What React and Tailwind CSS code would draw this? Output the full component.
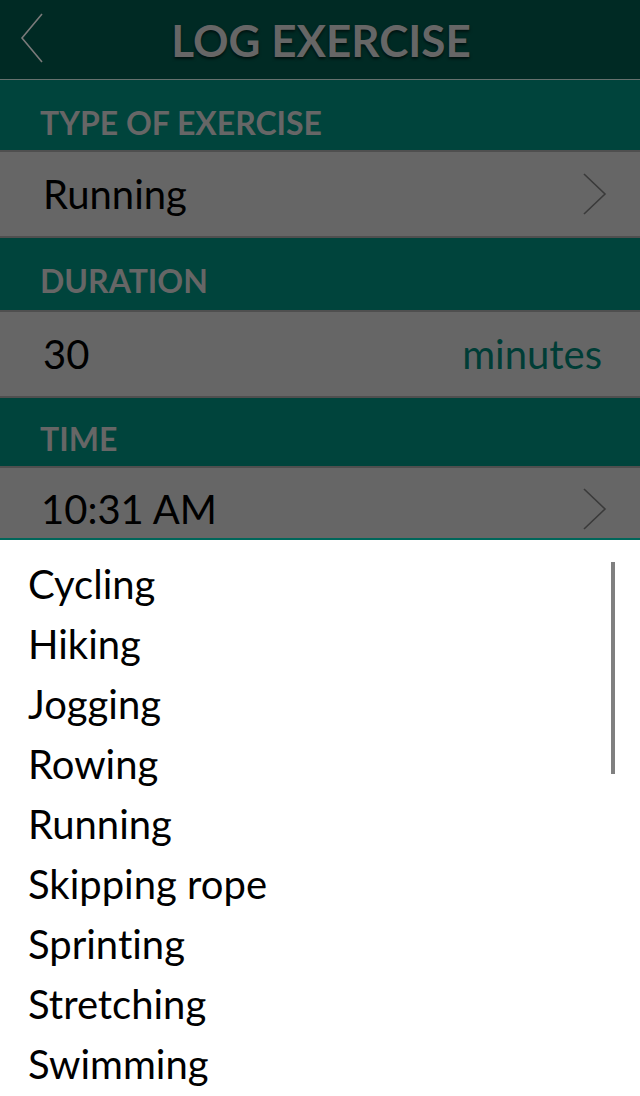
import React from 'react';

const exercises = [
    'Cycling',
    'Hiking',
    'Jogging',
    'Rowing',
    'Running',
    'Skipping rope',
    'Sprinting',
    'Stretching',
    'Swimming',
];

const Chevron = () => (
    <svg width="26" height="44" viewBox="0 0 26 44" className="shrink-0">
        <polyline points="2,2 23,22 2,42" fill="none" stroke="#3a3a3a" strokeWidth="1.6" />
    </svg>
);

const App = () => {
    return (
        <div className="w-[640px] h-[1096px] overflow-hidden bg-white font-[Lato,'Noto_Sans',sans-serif] [font-variant-ligatures:none] [font-feature-settings:'liga'_0,'clig'_0]">
            <div className="h-[80px] bg-[#002a24] border-b border-[#65716e] flex items-center relative">
                <svg width="30" height="54" viewBox="0 0 30 54" className="absolute left-[20px] top-[12px]">
                    <polyline points="22,2 2,26 22,50" fill="none" stroke="#7a7a7a" strokeWidth="1.6" />
                </svg>
                <div className="flex-1 text-center text-[44px] font-bold text-[#666666] leading-none pl-[2px] [text-shadow:0_2px_3px_rgba(0,0,0,0.6)]">
                    LOG EXERCISE
                </div>
            </div>

            <div className="h-[72px] bg-[#00443c] pt-[27px] px-[40px] border-b-2 border-[#4f4f4f]">
                <div className="text-[32px] font-bold text-[#666666] leading-none uppercase">Type of exercise</div>
            </div>
            <div className="h-[86px] bg-[#666666] flex items-center justify-between pl-[43px] pr-[32px] border-b-2 border-[#4f4f4f]">
                <span className="text-[40px] text-black">Running</span>
                <Chevron />
            </div>

            <div className="h-[74px] bg-[#00443c] pt-[27px] px-[40px] border-b-2 border-[#4f4f4f]">
                <div className="text-[32px] font-bold text-[#666666] leading-none uppercase">Duration</div>
            </div>
            <div className="h-[86px] bg-[#666666] flex items-center justify-between pl-[43px] pr-[38px] border-b-2 border-[#4f4f4f]">
                <span className="text-[40px] text-black">30</span>
                <span className="text-[40px] text-[#003d36]">minutes</span>
            </div>

            <div className="h-[70px] bg-[#00443c] pt-[25px] px-[40px] border-b-2 border-[#4f4f4f]">
                <div className="text-[32px] font-bold text-[#666666] leading-none uppercase">Time</div>
            </div>
            <div className="h-[72px] bg-[#666666] flex items-center justify-between pt-[12px] pl-[41px] pr-[32px] border-b-2 border-[#00665a] overflow-hidden">
                <span className="text-[40px] text-black">10:31 AM</span>
                <Chevron />
            </div>

            <div className="relative pt-[14px]">
                {exercises.map((name, index) => (
                    <div key={index} className="h-[60px] flex items-center pl-[28px] text-[40px] text-black">
                        {name}
                    </div>
                ))}
                <div className="absolute left-[611px] top-[22px] w-[4px] h-[212px] bg-[#808080]" />
            </div>
        </div>
    );
};

export default App;
